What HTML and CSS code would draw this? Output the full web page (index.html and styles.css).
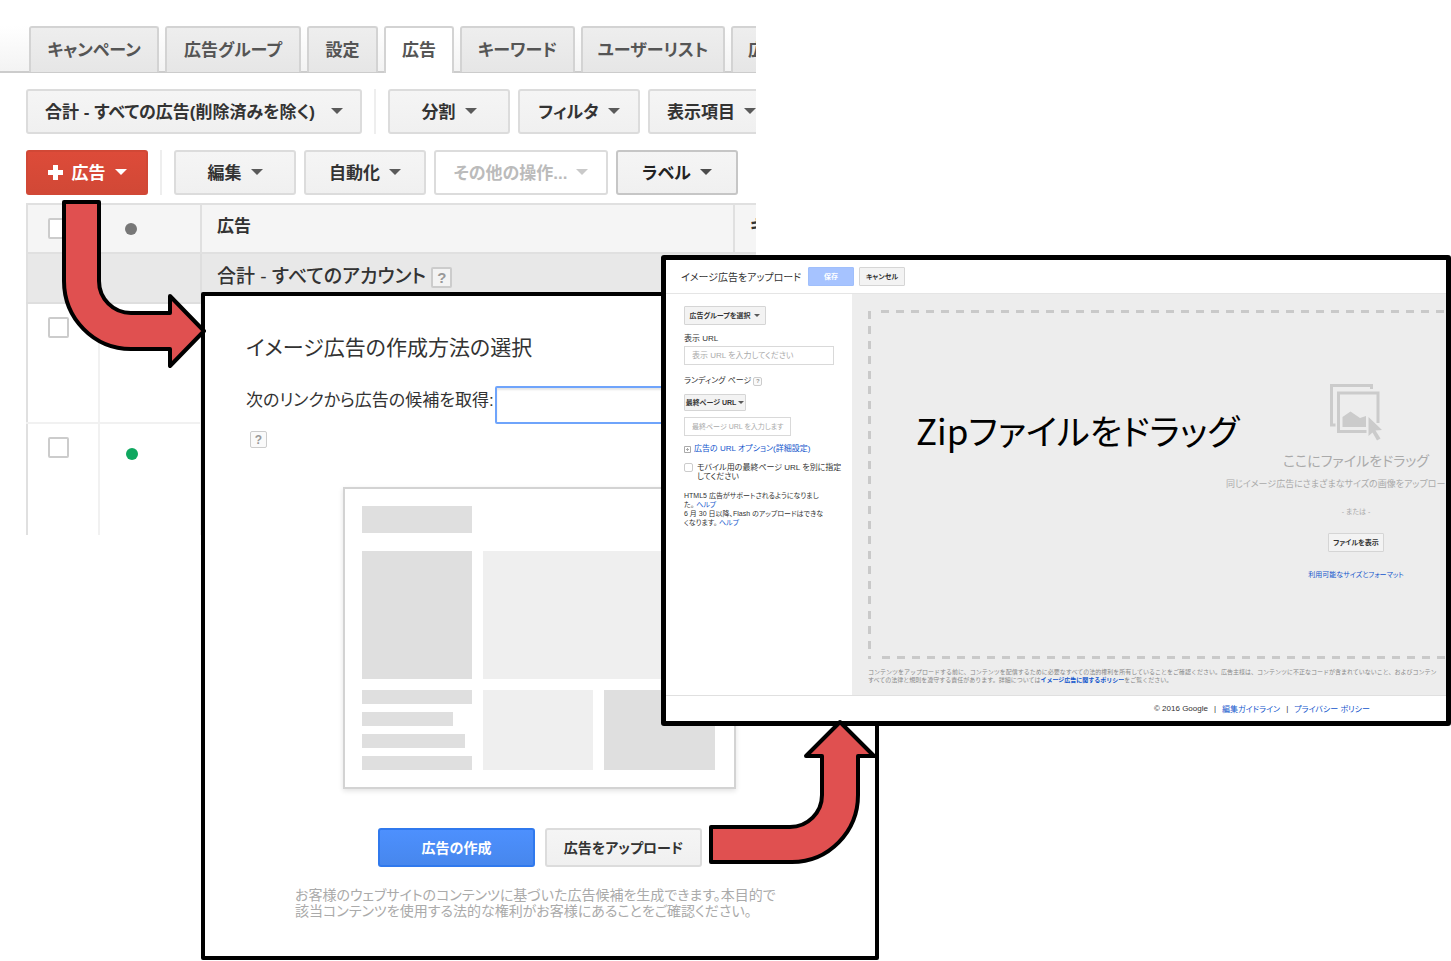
FILE: index.html
```
<!DOCTYPE html>
<html lang="ja">
<head>
<meta charset="utf-8">
<title>イメージ広告をアップロード</title>
<link rel="stylesheet" href="styles.css">
</head>
<body>
<main class="canvas">
  <section class="report">
    <nav class="tabs">
      <a class="tab" href="#">キャンペーン</a>
      <a class="tab" href="#">広告グループ</a>
      <a class="tab" href="#">設定</a>
      <a class="tab tab-active" href="#">広告</a>
      <a class="tab" href="#">キーワード</a>
      <a class="tab" href="#">ユーザーリスト</a>
      <a class="tab tab-last" href="#">広</a>
    </nav>
    <div class="toolbar">
      <button class="btn btn-scope" type="button">合計 - すべての広告(削除済みを除く)<span class="caret"></span></button>
      <span class="divider"></span>
      <button class="btn" type="button">分割<span class="caret"></span></button>
      <button class="btn" type="button">フィルタ<span class="caret"></span></button>
      <button class="btn" type="button">表示項目<span class="caret"></span></button>
    </div>
    <div class="toolbar">
      <button class="btn btn-red" type="button"><svg class="plus" viewBox="0 0 15 15"><path d="M5 0h5v5h5v5h-5v5H5v-5H0V5h5z" fill="#fff"/></svg>広告<span class="caret"></span></button>
      <span class="divider"></span>
      <button class="btn" type="button">編集<span class="caret"></span></button>
      <button class="btn" type="button">自動化<span class="caret"></span></button>
      <button class="btn btn-off" type="button" disabled>その他の操作...<span class="caret"></span></button>
      <button class="btn btn-strong" type="button">ラベル<span class="caret"></span></button>
    </div>
    <table class="grid">
      <colgroup><col class="col-check"><col class="col-status"><col class="col-ad"><col></colgroup>
      <thead>
        <tr class="row-head">
          <th class="cell-check no-line"><input class="check" type="checkbox" aria-label="すべて選択"></th>
          <th class="cell-dot"><span class="dot"></span></th>
          <th class="cell-text">広告</th>
          <th class="cell-text">キ</th>
        </tr>
      </thead>
      <tbody>
        <tr class="row-total">
          <td class="no-line"></td><td></td>
          <td class="cell-text" colspan="2">合計 - すべてのアカウント <button class="help help-lg" type="button">?</button></td>
        </tr>
        <tr class="row-ad">
          <td class="cell-check"><input class="check" type="checkbox" aria-label="広告を選択"></td>
          <td></td><td></td><td></td>
        </tr>
        <tr class="row-ad">
          <td class="cell-check"><input class="check" type="checkbox" aria-label="広告を選択"></td>
          <td class="cell-dot"><span class="dot dot-on"></span></td><td></td><td></td>
        </tr>
      </tbody>
    </table>
  </section>

  <section class="chooser">
    <h2 class="chooser-title">イメージ広告の作成方法の選択</h2>
    <div class="source">
      <label for="source">次のリンクから広告の候補を取得:</label>
      <input class="source-input" id="source" type="text">
    </div>
    <button class="help help-md" type="button">?</button>
    <div class="preview">
      <div class="block dark head"></div>
      <div class="block dark"></div>
      <div class="block wide"></div>
      <div class="lines"><i class="block dark"></i><i class="block dark short"></i><i class="block dark medium"></i><i class="block dark"></i></div>
      <div class="block"></div>
      <div class="block dark"></div>
    </div>
    <div class="actions">
      <button class="action action-blue" type="button">広告の作成</button>
      <button class="action" type="button">広告をアップロード</button>
    </div>
    <p class="note">お客様のウェブサイトのコンテンツに基づいた広告候補を生成できます。本目的で<br>該当コンテンツを使用する法的な権利がお客様にあることをご確認ください。</p>
  </section>

  <section class="upload">
    <header class="up-head">
      <h2 class="up-title">イメージ広告をアップロード</h2>
      <button class="mini mini-blue" type="button">保存</button>
      <button class="mini" type="button">キャンセル</button>
    </header>
    <div class="up-body">
      <form class="side">
        <button class="mini mini-group" type="button">広告グループを選択<span class="caret caret-sm"></span></button>
        <label class="side-label" for="display-url">表示 URL</label>
        <input class="field" id="display-url" type="text" placeholder="表示 URL を入力してください">
        <div class="side-label landing"><label for="final-url">ランディング ページ</label><button class="help help-sm" type="button">?</button></div>
        <button class="mini mini-url" type="button">最終ページ URL<span class="caret caret-sm"></span></button>
        <input class="field field-short" id="final-url" type="text" placeholder="最終ページ URL を入力します">
        <a class="options" href="#"><svg class="expand" viewBox="0 0 7 7"><path d="M.5.5h6v6h-6zM2 3.500h3M3.500 2v3" fill="none" stroke="#aaa"/></svg>広告の URL オプション(詳細設定)</a>
        <label class="mobile"><input class="check check-sm" type="checkbox"><span>モバイル用の最終ページ URL を別に指定<br>してください</span></label>
        <p class="tips">HTML5 広告がサポートされるようになりまし<br>た。 <a href="#">ヘルプ</a><br>6 月 30 日以降、Flash のアップロードはできな<br>くなります。 <a href="#">ヘルプ</a></p>
      </form>
      <div class="stage">
        <div class="drop">
          <strong class="callout">Zipファイルをドラッグ</strong>
          <div class="drop-inner">
            <svg class="drop-icon" viewBox="0 0 53 57"><g fill="none" stroke="#cbcbcb" stroke-width="3"><path d="M5.500 41H1.500V1.500H41.500V5"/><path d="M36.500 47.500H8.500V9H48V39"/></g><path d="M12.500 43V33L20.500 27.500L30 34L36 32V43ZM38.500 33L52 46L45.500 46.500L50.500 54.500L47 56.500L42.500 48.500L38.500 52Z" fill="#cbcbcb"/></svg>
            <div class="drop-title">ここにファイルをドラッグ</div>
            <div class="drop-desc">同じイメージ広告にさまざまなサイズの画像をアップロー</div>
            <div class="drop-or">- または -</div>
            <button class="mini mini-file" type="button">ファイルを表示</button>
            <a class="drop-link" href="#">利用可能なサイズとフォーマット</a>
          </div>
        </div>
        <p class="legal">コンテンツをアップロードする前に、コンテンツを配信するために必要なすべての法的権利を所有していることをご確認ください。広告主様は、コンテンツに不正なコードが含まれていないこと、およびコンテン<br>すべての法律と規則を遵守する責任があります。詳細については<a class="policy" href="#">イメージ広告に関するポリシー</a>をご覧ください。</p>
      </div>
    </div>
    <footer class="up-foot">
      <span>© 2016 Google</span><span>|</span><a href="#">編集ガイドライン</a><span>|</span><a href="#">プライバシー ポリシー</a>
    </footer>
  </section>

  <svg class="arrow arrow-one" viewBox="60 198 150 172" width="150" height="172"><path d="M64 202H99V281A32 32 0 0 0 131 313H170V296L204 331L170 366V349H131A67 68 0 0 1 64 281Z"/></svg>
  <svg class="arrow arrow-two" viewBox="706 718 174 148" width="174" height="148"><path d="M711 827H790A32 32 0 0 0 822 795V756H806L840 722L874 756H858V795A66 67 0 0 1 792 862H711Z"/></svg>
</main>
</body>
</html>
```
FILE: styles.css
```
* { box-sizing: border-box; }
body {
  margin: 0;
  background: #fff;
  color: #333;
  font-family: "Liberation Sans", "Noto Sans CJK JP", sans-serif;
  font-feature-settings: "palt";
}
button, input { font-family: inherit; font-feature-settings: inherit; margin: 0; }
a { color: #15c; text-decoration: none; }
h2, p { margin: 0; font-weight: 400; }
.canvas { position: relative; min-height: 961px; overflow: hidden; }

/* Report */
.report { position: absolute; top: 0; left: 0; width: 52.1%; height: 535px; overflow: hidden; }
.tabs {
  display: grid;
  grid-template-columns: 130px 136px 71px 70px 115px 144px 120px;
  gap: 6px;
  height: 73px;
  padding: 26px 0 0 29px;
  border-bottom: 2px solid #ccc;
  background: linear-gradient(#fff 26px, #f3f3f3);
}
.tab {
  display: flex;
  align-items: center;
  justify-content: center;
  height: 46px;
  padding-bottom: 4px;
  border: 2px solid #d3d3d3;
  border-bottom-width: 0;
  border-radius: 3px 3px 0 0;
  background: linear-gradient(#eee, #e6e6e6);
  color: #555;
  font-size: 17px;
  font-weight: 700;
  white-space: nowrap;
}
.tab-active { height: 47px; padding-bottom: 5px; background: #fff; }
.tab-last { justify-content: flex-start; padding-left: 15px; }
.toolbar { display: flex; gap: 8px; padding: 16px 0 0 26px; }
.btn {
  display: flex;
  flex: none;
  align-items: center;
  justify-content: center;
  gap: 9px;
  min-width: 122px;
  height: 45px;
  padding: 0 17px 3px;
  border: 2px solid #dcdcdc;
  border-radius: 3px;
  background: linear-gradient(#f5f5f5, #f0f0f0);
  color: #333;
  font-size: 17px;
  font-weight: 700;
  white-space: nowrap;
}
.btn-scope { justify-content: space-between; min-width: 336px; }
.btn-red { border-color: #d14836; background: linear-gradient(#dd4b39, #d14836); color: #fff; }
.btn-off { min-width: 174px; background: #fff; color: #bbb; }
.btn-strong { border-color: #c6c6c6; color: #222; }
.plus { width: 15px; height: 15px; margin-top: 2px; }
.caret { margin-top: 2px; border: 6px solid transparent; border-top-color: currentColor; border-bottom-width: 0; opacity: .8; }
.btn-red .caret { opacity: 1; }
.caret-sm { margin-top: 0; border-width: 3px; border-bottom-width: 0; }
.divider { flex: none; width: 2px; margin: 0 4px; background: #eee; }
.grid { width: 100%; margin: 8px 0 0 26px; border-collapse: collapse; table-layout: fixed; }
.col-check { width: 72px; }
.col-status { width: 102px; }
.col-ad { width: 533px; }
.grid th, .grid td { padding: 0; border: 2px solid #f1f1f1; text-align: left; vertical-align: top; }
.grid th { border-color: #e0e0e0; background: #f5f5f5; }
.grid .row-total td { border-color: #dedede; background: #e8e8e8; }
.grid .no-line { border-right: 0; }
.grid .no-line + * { border-left: 0; }
.grid td:first-child { border-left-color: #e0e0e0; }
.row-head { height: 49px; }
.row-total { height: 50px; }
.row-ad { height: 120px; }
.grid .cell-check { padding: 13px 0 0 20px; }
.grid .cell-dot { padding: 18px 0 0 26px; }
.grid .row-ad .cell-dot { padding-top: 24px; }
.grid .cell-text { padding: 0 15px; color: #333; font-size: 17px; line-height: 44px; font-weight: 700; white-space: nowrap; overflow: hidden; }
.grid .row-total .cell-text { font-size: 19px; font-weight: 500; line-height: 46px; }
.check { display: block; appearance: none; width: 21px; height: 21px; border: 2px solid #ccc; border-radius: 2px; background: #fff; }
.check-sm { flex: none; width: 9px; height: 9px; border-width: 1px; }
.dot { display: block; width: 12px; height: 12px; border-radius: 50%; background: #777; }
.dot-on { background: #0fa75f; }
.help { display: inline-flex; align-items: center; justify-content: center; padding: 0; border: 2px solid #ccc; border-radius: 2px; background: #fafafa; color: #999; font-weight: 700; }
.help-lg { width: 21px; height: 21px; font-size: 15px; background: #f3f3f3; }
.help-md { width: 17px; height: 17px; border-width: 1px; font-size: 12px; }
.help-sm { width: 9px; height: 9px; border-width: 1px; font-size: 6px; }

/* Method chooser */
.chooser {
  position: absolute;
  top: 292px;
  left: 201px;
  width: 46.7%;
  padding: 38px 0 37px 41px;
  border: 4px solid #000;
  border-radius: 2px;
  background: #fff;
}
.chooser-title { font-size: 21px; line-height: 28px; }
.source { display: flex; align-items: center; gap: 2px; margin-top: 24px; font-size: 17px; white-space: nowrap; }
.source label { width: 247px; padding-bottom: 8px; line-height: 28px; }
.source-input { flex: 1; height: 38px; margin-right: 60px; border: 2px solid #6fa4fb; border-radius: 2px; box-shadow: inset 0 2px 2px #e5e5e5; }
.chooser > .help { display: flex; margin: 7px 0 0 4px; }
.preview {
  display: grid;
  grid-template: 34px 128px 80px / 110px 110px 111px;
  gap: 11px;
  width: 393px;
  margin: 39px 0 0 97px;
  padding: 17px;
  border: 2px solid #d3d3d3;
  box-shadow: 0 2px 5px #e2e2e2;
}
.block { background: #efefef; }
.dark { background: #dfdfdf; }
.head { grid-column: 1 / -1; width: 110px; height: 27px; }
.wide { grid-column: span 2; }
.lines { display: flex; flex-direction: column; justify-content: space-between; }
.lines .block { height: 14px; }
.lines .short { width: 91px; }
.lines .medium { width: 103px; }
.actions { display: flex; gap: 10px; margin: 39px 0 0 132px; }
.action { width: 157px; height: 39px; padding: 0 0 2px; border: 2px solid #dcdcdc; border-radius: 3px; background: linear-gradient(#f5f5f5, #f0f0f0); color: #333; font-size: 14px; font-weight: 700; white-space: nowrap; }
.action-blue { border-color: #3079ed; background: linear-gradient(#4d90fe, #4787ed); color: #fff; }
.note { margin: 20px 0 0 49px; color: #aaa; font-size: 14px; line-height: 16px; white-space: nowrap; }

/* Uploader */
.upload { position: absolute; top: 255px; left: 661px; right: 0; overflow: hidden; border: 5px solid #000; border-radius: 3px; background: #fff; font-size: 8px; }
.up-head { display: flex; align-items: center; height: 34px; padding-left: 15px; border-bottom: 1px solid #e5e5e5; }
.up-title { width: 122px; margin-right: 5px; font-size: 10px; white-space: nowrap; }
.mini { display: flex; align-items: center; justify-content: center; gap: 4px; min-width: 46px; height: 19px; padding: 0 4px 1px; border: 1px solid #d5d5d5; border-radius: 1px; background: #f3f3f3; color: #333; font-size: 7px; font-weight: 700; white-space: nowrap; }
.up-head .mini + .mini { margin-left: 5px; }
.mini-blue { border-color: #a0bffb; background: #a6c3ff; color: #fff; }
.mini-group { width: 82px; }
.mini-url { width: 62px; height: 17px; margin-top: 7px; gap: 2px; }
.up-body { display: flex; height: 401px; }
.side { display: flex; flex: none; flex-direction: column; align-items: flex-start; width: 186px; padding: 12px 0 0 18px; }
.side-label { margin-top: 8px; font-size: 8px; line-height: 12px; }
.landing { display: flex; align-items: center; gap: 2px; margin-top: 10px; }
.field { width: 150px; height: 19px; margin-top: 1px; padding: 0 0 0 7px; border: 1px solid #d9d9d9; font-size: 8px; }
.field::placeholder { color: #aaa; opacity: 1; }
.field-short { width: 107px; margin-top: 6px; font-size: 7px; }
.options { display: flex; align-items: center; gap: 3px; margin-top: 7px; font-size: 8px; line-height: 12px; white-space: nowrap; }
.expand { width: 7px; height: 7px; }
.mobile { display: flex; gap: 4px; margin-top: 8px; line-height: 9px; white-space: nowrap; }
.tips { margin-top: 10px; font-size: 7px; line-height: 9px; white-space: nowrap; }
.stage { flex: 1; min-width: 0; padding: 16px 0 0 16px; background: #ededed; }
.drop {
  position: relative;
  height: 349px;
  padding-top: 74px;
  background:
    repeating-linear-gradient(90deg, #c9c9c9 0 8px, transparent 8px 15px) 13px 0 / 100% 3px no-repeat,
    repeating-linear-gradient(90deg, #c9c9c9 0 8px, transparent 8px 15px) 14px 100% / 100% 3px no-repeat,
    repeating-linear-gradient(#c9c9c9 0 8px, transparent 8px 15px) 0 1px / 3px 100% no-repeat;
}
.callout { position: absolute; top: 90px; left: 48px; color: #000; font-family: "Noto Sans CJK JP", sans-serif; font-size: 35px; line-height: 60px; font-weight: 400; white-space: nowrap; }
.drop-inner { display: flex; flex-direction: column; align-items: center; width: 260px; margin-left: 358px; color: #aaa; white-space: nowrap; }
.drop-icon { width: 53px; height: 57px; }
.drop-title { margin-top: 10px; font-size: 14px; line-height: 20px; }
.drop-desc { align-self: flex-start; margin-top: 7px; font-size: 9px; line-height: 12px; }
.drop-or { margin-top: 16px; font-size: 7px; line-height: 12px; }
.mini-file { width: 56px; margin-top: 15px; }
.drop-link { margin-top: 17px; font-size: 7px; line-height: 12px; }
.legal { margin-top: 9px; color: #888; font-size: 6px; font-feature-settings: normal; line-height: 8px; white-space: nowrap; }
.policy { font-weight: 700; }
.up-foot { display: flex; align-items: center; justify-content: flex-end; gap: 6px; height: 26px; padding-right: 76px; border-top: 1px solid #e0e0e0; }

/* Flow arrows */
.arrow { position: absolute; fill: #e05050; stroke: #000; stroke-width: 4; stroke-linejoin: round; }
.arrow-one { top: 198px; left: 60px; }
.arrow-two { top: 718px; left: 706px; }
```
